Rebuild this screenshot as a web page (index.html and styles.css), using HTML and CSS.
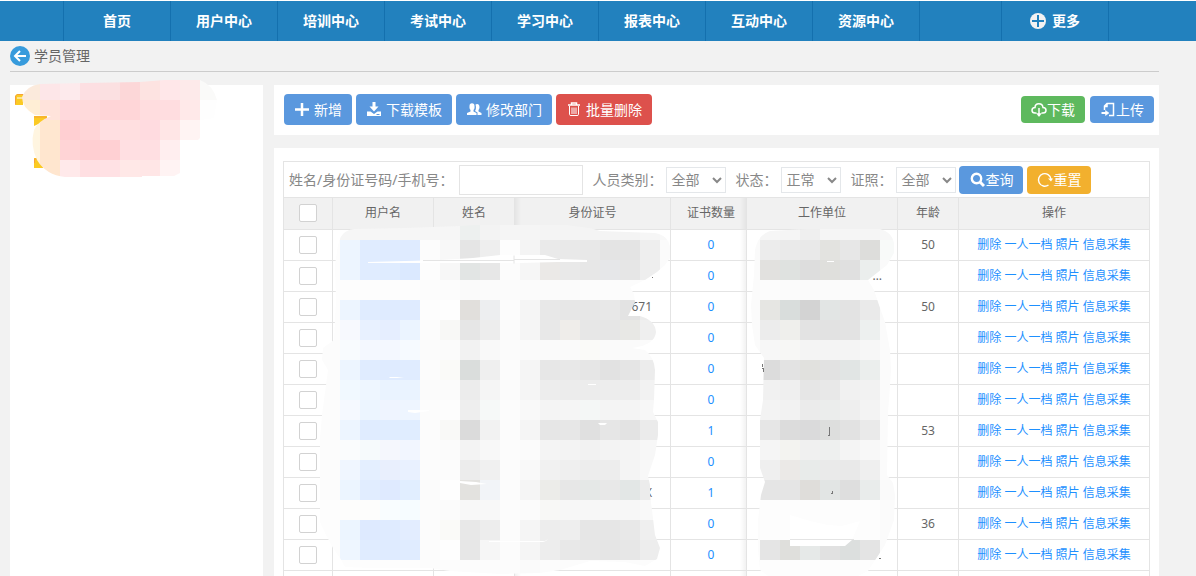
FILE: index.html
```html
<!DOCTYPE html>
<html lang="zh-CN">
<head>
<meta charset="utf-8">
<title>学员管理</title>
<link rel="stylesheet" href="styles.css">
</head>
<body>
<nav class="topnav">
  <span class="nav-lead"></span>
  <a class="nav-item" href="#">首页</a>
  <a class="nav-item" href="#">用户中心</a>
  <a class="nav-item" href="#">培训中心</a>
  <a class="nav-item" href="#">考试中心</a>
  <a class="nav-item" href="#">学习中心</a>
  <a class="nav-item" href="#">报表中心</a>
  <a class="nav-item" href="#">互动中心</a>
  <a class="nav-item" href="#">资源中心</a>
  <span class="nav-gap"></span>
  <a class="nav-item" href="#"><svg class="icon" width="16" height="16" viewBox="0 0 16 16"><circle cx="8" cy="8" r="8" fill="#f2f2f2"/><path d="M8 2v12M2 8h12" stroke="#2181be" stroke-width="2"/></svg>更多</a>
  <span class="nav-tail"></span>
</nav>
<header class="crumb">
  <a class="back" href="#" aria-label="返回"><svg class="icon" width="20" height="20" viewBox="0 0 20 20"><circle cx="10" cy="10" r="10" fill="#379bdc"/><path d="M16 10H5.500M10 5l-5 5 5 5" fill="none" stroke="#fff" stroke-width="2"/></svg></a>
  <span>学员管理</span>
</header>
<div class="layout">
  <aside class="sidebar">
    <svg class="tree-cover" width="210" height="100" viewBox="10 80 210 100">
      <g fill="#fbca23"><path d="M15 96l2-2h6v11h-8zM34 116h13v4l-13 6zM34 158h4l5 8v2h-9z"/></g>
      <g fill="none" stroke="#f6a13a"><path d="M15.500 104v-8l2-1.500h6M34 117h12v2M34.500 163v-4h3"/></g>
      <path d="M17 98h6" stroke="#fff"/>
      <clipPath id="tree-shape"><path d="M22 97Q26 86 40 84L85 83L140 82L165 80H200Q213 85 217 100L214 118L200 120V138L198 140H180V173L174 176L142 176V177H65Q46 175 37 160Q30 145 34 130Q38 121 51 116L35 115Q22 108 22 97z"/></clipPath>
      <g id="tree-mosaic" clip-path="url(#tree-shape)"></g>
    </svg>
  </aside>
  <main class="main">
    <section class="toolbar">
      <button class="btn" type="button"><svg class="icon" width="16" height="16" viewBox="0 0 16 16"><path d="M8 1v13M1 7.500h14" stroke="#fff" stroke-width="2.500"/></svg>新增</button>
      <button class="btn" type="button"><svg class="icon" width="16" height="16" viewBox="0 0 16 16" fill="#fff"><path d="M6.500 0h3v4.500h3L8 9.500 3.500 4.500h3zM1 9.500h3.500L8 12l3.500-2.500H15V14H1z"/><path d="M10.500 12.500h3" stroke="#5a98de"/></svg>下载模板</button>
      <button class="btn" type="button"><svg class="icon" width="16" height="16" viewBox="0 0 16 16" fill="#fff"><path d="M3.500 4a2.500 2.800 0 0 1 5 0c.3 2-.2 3-1 4v1.500L10.500 11v2H1v-2l3.500-1.500V8c-.8-1-1.200-2-1-4z"/><path d="M9.500 2.500c2-1.500 4 0 4 2.500 0 1.500-.5 2.500-1 3v1.500l3 1.500v2h-4v-2.500L9 9c.8-1 1.500-3.500.500-6.500z"/></svg>修改部门</button>
      <button class="btn btn-red" type="button"><svg class="icon" width="16" height="16" viewBox="0 0 16 16" fill="none" stroke="#fff"><path d="M2 3h12M5.500 2.500V1h5v1.500" stroke-width="1.500"/><path d="M3.500 4v8.500q0 1 1.500 1h6q1.500 0 1.500-1V4M6 5.500V12M8 5.500V12M10 5.500V12"/></svg>批量删除</button>
      <div class="side-actions">
        <button class="btn btn-side btn-green" type="button"><svg class="icon" width="16" height="16" viewBox="0 0 16 16" fill="none" stroke="#fff" stroke-width="1.500"><path d="M5.500 11H4C0 11 0 5.500 4 5.500 4 .5 11.500.5 12 5.500c4 0 4 5.500 0 5.500h-1.500"/><path d="M8 6v8"/><path d="M5.500 11.500h5L8 14.500z" fill="#fff" stroke-width=".5"/></svg>下载</button>
        <button class="btn btn-side" type="button"><svg class="icon" width="16" height="16" viewBox="0 0 16 16" fill="none" stroke="#fff" stroke-width="1.500"><path d="M4.500 8V4l2.500-2.500h6.500v12H9M4.500 4.500H7V2"/><path d="M1.500 11H7" stroke-width="2"/><path d="M5.500 8.500l3.500 2.500-3.500 2.500z" fill="#fff" stroke-width=".5"/></svg>上传</button>
      </div>
    </section>
    <section class="panel">
      <div class="grid-box">
        <form class="filters">
          <label for="kw">姓名/身份证号码/手机号：</label><input class="kw" id="kw" type="text">
          <label for="kind">人员类别：</label><select id="kind"><option>全部</option></select>
          <label for="state">状态：</label><select id="state"><option>正常</option></select>
          <label for="cert">证照：</label><select class="last" id="cert"><option>全部</option></select>
          <button class="btn btn-filter" type="button"><svg class="icon" width="16" height="16" viewBox="0 0 16 16" fill="none" stroke="#fff"><circle cx="7.500" cy="6.500" r="4.700" stroke-width="2.400"/><path d="M11 10l4 4" stroke-width="3"/></svg>查询</button>
          <button class="btn btn-filter btn-amber" type="button"><svg class="icon" width="16" height="16" viewBox="0 0 16 16" fill="none" stroke="#fff"><path d="M14 7A6.300 6.300 0 1 0 11.500 13" stroke-width="1.400"/><path d="M11 6.500h5L14 9.500z" fill="#fff" stroke="none"/></svg>重置</button>
        </form>
        <table class="grid">
          <colgroup><col class="c-check"><col class="c-user"><col class="c-name"><col class="c-id"><col class="c-cert"><col class="c-unit"><col class="c-age"><col></colgroup>
          <thead><tr><th><input type="checkbox" aria-label="全选"></th><th>用户名</th><th>姓名</th><th class="shade-l">身份证号</th><th class="shade-r">证书数量</th><th>工作单位</th><th>年龄</th><th>操作</th></tr></thead>
          <tbody id="rows"></tbody>
        </table>
      </div>
      <svg class="grid-cover" width="580" height="351" viewBox="320 225 580 351">
        <clipPath id="left-shape"><path d="M338 245Q341 230 354 229L405 228L460 226L490 224L530 223L560 224L590 228L600 231L655 233Q668 235 670 247V258L665 265L657 272L645 280L630 287L634 294L635 302L628 316H640Q655 320 656 332Q655 345 632 348L645 350Q654 357 655 370L654 400L653 412L658 422V435L655 455L648 476L650 485V495L652 510L655 535L660 548L657 559L645 566L625 562L590 561L560 570L540 573L500 574L450 571L430 568H370L345 567L340 558L333 548L326 535L320 522L319 450L322 415L324 400L328 370L322 360L323 348L334 340L336 300L335 265z"/></clipPath>
        <clipPath id="right-shape"><path d="M755 250Q758 235 770 231L807 229H880Q892 232 894 243V253L887 265L868 280L874 290L879 305L885 322L890 350L891 370L889 400L888 412L887 475L893 483L895 495L894 520L885 545L868 571L858 576H768L760 570L758 550V520L761 495L765 482L760 468V420L763 400L764 358L755 345L752 325L751 305L754 275z"/></clipPath>
        <g id="left-mosaic" clip-path="url(#left-shape)"></g>
        <g id="right-mosaic" clip-path="url(#right-shape)"></g>
        <g fill="#fff"><path d="M368 262L405 261L440 260L473 258L500 255H545L558 259L587 260V262H558L520 263H368zM389 377h15l-7 1h-7zM408 410h21v1l-14 2-7-1zM460 481l16 1 11 2-16 1-11-2zM588 384h8v1h-8zM598 423h9l-2 2h-5zM489 541h56l3-2-2 2-3 1h-54zM790 515L810 521L828 525L842 526L860 521L852 540L845 546H790zM827 261h7v1h-7z"/></g>
        <path d="M423 260.500h91m0-5v8m0-4h46" stroke="#e4e4e4" fill="none"/>
        <path d="M790 539.500h64" stroke="#e4e4e4"/>
        <path d="M829.500 427v8M828 435.500h2M831 493.500h2M832.500 491v2M762.500 364v3M762 368.500h2M763.500 369v3M879 558.500h2M652 277.500h1" stroke="#777" fill="none"/>
      </svg>
    </section>
  </main>
</div>
<script src="app.js"></script>
</body>
</html>
```
FILE: styles.css
```css
* { box-sizing: border-box; }
body {
  margin: 0;
  height: 100vh;
  overflow: hidden;
  display: flex;
  flex-direction: column;
  background: #f2f2f2;
  color: #666;
  font: 14px/20px "Noto Sans", "Noto Sans CJK SC", sans-serif;
}
a { color: #1e90ff; text-decoration: none; }
button, input, select { font: inherit; margin: 0; }
.icon { flex: none; display: block; }

.topnav {
  display: flex;
  flex: none;
  height: 41px;
  border-top: 1px solid #fff;
  background: #2281be;
}
.nav-lead { width: 63px; }
.nav-item, .nav-gap, .nav-tail { border-left: 1px solid #1470ae; }
.nav-gap { width: 82px; }
.nav-tail { flex: 1; }
.nav-item {
  width: 107px;
  display: flex;
  align-items: center;
  justify-content: center;
  gap: 6px;
  color: #fff;
  font-weight: bold;
}

.crumb {
  flex: none;
  display: flex;
  align-items: center;
  gap: 4px;
  height: 31px;
  margin: 0 37px 0 10px;
  border-bottom: 1px solid #ccc;
}

.layout {
  flex: 1;
  min-height: 0;
  display: flex;
  gap: 11px;
  margin: 13px 37px 0 10px;
}
.sidebar { position: relative; width: 253px; background: #fff; }
.tree-cover { position: absolute; left: 0; top: -5px; }
.main {
  flex: 1;
  min-width: 0;
  display: flex;
  flex-direction: column;
  gap: 13px;
}

.toolbar {
  flex: none;
  display: flex;
  align-items: center;
  gap: 4px;
  height: 50px;
  padding: 0 5px 1px 10px;
  background: #fff;
}
.side-actions { display: flex; gap: 5px; margin-left: auto; }
.btn {
  display: flex;
  align-items: center;
  gap: 4px;
  height: 31px;
  padding: 0 10px;
  border: 0;
  border-radius: 4px;
  background: #5a98de;
  color: #fff;
  white-space: nowrap;
}
.btn-side { height: 27px; gap: 0; }
.btn-filter { height: 28px; gap: 0; margin-right: 4px; }
.btn-red { background: #dd514c; }
.btn-green { background: #5eb95e; }
.btn-amber { background: #f2b02e; }

.panel {
  position: relative;
  flex: 1;
  min-height: 0;
  padding: 13px 9px 0;
  background: #fff;
}
.grid-box { border: 1px solid #e4e4e4; }
.filters {
  display: flex;
  align-items: center;
  height: 35px;
  padding-left: 5px;
  color: #888;
  white-space: nowrap;
}
.filters label { margin-right: 4px; }
.filters select {
  width: 60px;
  height: 26px;
  margin-right: 9px;
  padding: 0;
  border: 1px solid #e4e7ea;
  border-radius: 0;
  background: #fff;
  color: #888;
}
.filters .last { margin-right: 3px; }
.kw {
  width: 124px;
  height: 30px;
  margin: 0 9px 0 2px;
  border: 1px solid #e4e4e4;
}

.grid {
  width: 100%;
  table-layout: fixed;
  border-collapse: separate;
  border-spacing: 0;
  font-size: 12px;
  text-align: center;
}
.c-check { width: 49px; }
.c-user { width: 101px; }
.c-name { width: 81px; }
.c-id { width: 156px; }
.c-cert { width: 76px; }
.c-unit { width: 151px; }
.c-age { width: 61px; }
.grid th, .grid td {
  height: 31px;
  padding: 0;
  border-right: 1px solid #e4e4e4;
  border-bottom: 1px solid #e4e4e4;
  line-height: 18px;
  white-space: nowrap;
}
.grid th {
  height: 33px;
  padding-bottom: 1px;
  border-top: 1px solid #e4e4e4;
  background-color: #f1f1f1;
  font-weight: normal;
}
.grid th:last-child, .grid td:last-child { border-right: 0; }
.shade-l { background-image: linear-gradient(to right, rgba(0,0,0,.05), transparent 6px); }
.shade-r { background-image: linear-gradient(to left, rgba(0,0,0,.05), transparent 6px); }
.grid .shade-r { padding-left: 5px; }
.grid .id-tail { padding-right: 18px; text-align: right; }
.grid .unit-tail { padding-right: 15px; text-align: right; }
.grid input {
  appearance: none;
  display: block;
  width: 18px;
  height: 18px;
  margin: 0 auto;
  border: 1px solid #d2d2d2;
  border-radius: 2px;
  background: #fff;
}
.grid-cover { position: absolute; left: 46px; top: 77px; pointer-events: none; }
```
FILE: app.js
```js
const rows = [
  { certs: 0, age: 50 }, { certs: 0, unit: "…" }, { certs: 0, age: 50, id: "671" }, { certs: 0 },
  { certs: 0 }, { certs: 0 }, { certs: 1, age: 53 }, { certs: 0 },
  { certs: 1, id: "X" }, { certs: 0, age: 36 }, { certs: 0 }
];
const actions = ["删除", "一人一档", "照片", "信息采集"].map(t => `<a href="#">${t}</a>`).join(" ");
document.getElementById("rows").innerHTML = rows.map((r, i) => `<tr>
  <td><input type="checkbox" aria-label="选择第${i + 1}行"></td><td></td><td></td>
  <td class="shade-l id-tail">${r.id || ""}</td>
  <td class="shade-r"><a href="#">${r.certs}</a></td>
  <td class="unit-tail">${r.unit || ""}</td><td>${r.age || ""}</td><td>${actions}</td></tr>`).join("")
  + `<tr><td></td><td></td><td></td><td class="shade-l"></td><td class="shade-r"></td><td></td><td></td><td></td></tr>`;

// Privacy mosaic: 20px tiles; a two-digit value is a grey level
function mosaic(id, x0, y0, lines) {
  document.getElementById(id).innerHTML = lines.map((line, r) =>
    line.split(" ").map((c, i) =>
      `<rect x="${x0 + i * 20}" y="${y0 + r * 20}" width="20" height="20" fill="#${c.length === 2 ? c + c + c : c}"/>`
    ).join("")).join("");
}
mosaic("tree-mosaic", 20, 80, [
  "fbeadc fde6e8 fdeaec fddfe2 fbe0e1 fcd7d8 fde3e1 ffe7e9 fdeaea fafaf9",
  "ffeed5 ffe3db ffd9dc ffdadb ffd5d7 ffd6d8 ffdddf ffdde0 ffe9e9 fefefe",
  "fff5e0 ffe7d0 ffcfd2 ffd5d7 ffdfe1 ffdfe0 ffdbe0 ffe6e6 fff4f3 ff",
  "fff5e0 ffe6cf ffd4d6 ffcfd2 ffd0d3 ffdfe2 ffdfe2 ffeeef ff ff",
  "fff1dc ffe6cf ffe9ea ffdfe2 ffe1e4 ffe8e7 ffe6e6 fff3f3 ff ff"
]);
mosaic("left-mosaic", 300, 220, [
  "fd fd f6 f6 f6 f6 f6 f6 edf0ef f3 f5 f5 f4 f4 f4 f4 f4 f6 f8",
  "fd fd edf5ff e0ecff dfebff dfebff fc f8 e5 ee fd f4 ea e9 e8 e4 e4 ee fb",
  "fd fd edf5ff e0ecff dfecff dbe9ff fd f7 e2e5e4 e7 fc f6 ebe9e7 e9 e7 e6e7e9 e6 ee fb",
  "fd fd fd fd fd fd fc fc fa fb fb fb fb fb fc fc fc fc",
  "fd fd edf5ff e0ecff dfebff dfebff fd fe e1dfdc edeef0 fc f5 e8 e7 e7 e8 e3 ec fb",
  "fd fd f7f9fe e8f1ff e6eeff ebf4ff fc f8f8f6 e6 ed fb f5 e8 efedea e7 e6 e8e8e5 ef fb",
  "fc fc f8fbfe f4f8ff f4f8ff f6faff fb fb f2 f9 fb fa fa fa fafaf8 fa fa fb fb",
  "fc fc edf5ff e0ecff dfebff e0ecff fc fafaf8 dadddc ef fc f5 e7 e8 e6 e2 e5 ec fa",
  "fc fc f1f9ff eef6ff eaf3ff eaf3ff fb fb ec f5 fb f5 ed ec ec ed ed f2 fa",
  "fc fc f5f9ff ecf5ff eff4ff eef5ff fc fd ee f6f9f8 fc f9 f4 f5 f4f7f6 f4 f4 f7 fb",
  "fc fc edf5ff e0ecff e0edff e0edff fc f9f9f7 db f2 fc f5 e6 e7 e0 e6 e3 eb fa",
  "fc fc fafcfd f6fafc f5f7fd f2f6ff fc fb f3 f8 fc fb f4 f3 f2 f3 f4 f7 fb",
  "fc fc f0f6ff e4efff e9effd e9f1ff fc fc ec f0 fc f9 f1 ef ed ed f4 f8 fb",
  "fc fc ecf5ff e1edff dfeaff e1eeff fb fe e3e2df f2f4f8 fc f5 ecece9 e7 e5e8e7 e8 e3e7e6 ec fa",
  "fd fd fdfdfc fdfdfc f9fdff f6fcff fc fb f8 f8 fc fb f8f8f6 f7 f7 f7 f7 f9 fb",
  "fd fd ecf5ff deeaff dfebff e3edff fc fafaf8 e8 ed fc f5 ed ee e6 e6 e8 ef fa",
  "fd fd eef6ff e0ecff dfebff e0ecff fc fe e7 f6 fc f5 ed e8 e7 e5 e7 ed fa",
  "fd fd fd fd fd fd fc fc fc fc fc fa fc fc fc fc fc fc fc"
]);
mosaic("right-mosaic", 740, 220, [
  "fa f6 f5 ef f5 f5 f5 f7",
  "fa ec ea e9 e3e3e0 e7 dddddb f8faf9",
  "fb e2e1df dfe2e0 dd dfdfdc e0 ebeeed fa",
  "fb fc fb fa fb fb fb fb",
  "fb e6e6e3 d9dddc d3 e2e5e4 e3 ea fa",
  "fb ec efefec e3 e2 e3 edf0ef fb",
  "fb f7 f7f7f5 f4 f4 f4 f7 fb",
  "fb dc e3 e1e1de e2 e1e5e4 ebeeed fb",
  "fb f1 ef e6 e8 f1 f2 fb",
  "fb f3 f2 eb ebedec ee f3 fb",
  "fb e6 dc dadadb dddedd e2 ea fb",
  "fb f5 f3f3f0 f0 eef0ef f4 f8 fb",
  "fb ef ebe9e7 e8ebea ea e9 ef fb",
  "fb e5 e5 dfddda e2e5e4 de e9eceb fa",
  "fc fd fd fd fd fd fd fb",
  "fc fd fd fd fd fd fd fb",
  "fc e5 dfdfdc e6e9e8 e1 dcdfde e4 fb",
  "fc fd fd fd fd fd fd fb"
]);
```
